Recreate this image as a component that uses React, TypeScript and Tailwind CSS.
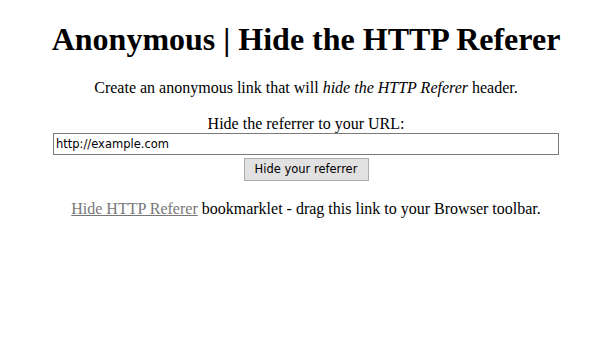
export default function App() {
  return (
    <div className="w-[612px] text-center text-black bg-white" style={{ fontFamily: '"Liberation Serif", "Times New Roman", serif' }}>
      <h1 className="text-[32px] font-bold leading-[37px] pt-[21px] mb-[21px]">Anonymous | Hide the HTTP Referer</h1>
      <p className="text-[16px] leading-[18px] mb-[18px]">
        Create an anonymous link that will <em>hide the HTTP Referer</em> header.
      </p>
      <form className="flex flex-col items-center" onSubmit={(e) => e.preventDefault()}>
        <div className="text-[16px] leading-[18px]">Hide the referrer to your URL:</div>
        <input
          type="text"
          defaultValue="http://example.com"
          className="w-[506px] h-[22px] border border-[#7a7a7a] px-[2px] text-black bg-white outline-none text-[11.5px]"
          style={{ fontFamily: '"DejaVu Sans", Tahoma, sans-serif' }}
        />
        <button
          type="submit"
          className="mt-[3px] h-[23px] w-[125px] border border-[#adadad] bg-[#e1e1e1] text-black text-[11.5px]"
          style={{ fontFamily: '"DejaVu Sans", Tahoma, sans-serif' }}
        >
          Hide your referrer
        </button>
      </form>
      <p className="text-[16px] leading-[18px] mt-[19px]">
        <a href="#" className="text-[#777777] underline">Hide HTTP Referer</a> bookmarklet - drag this link to your Browser toolbar.
      </p>
    </div>
  );
}
